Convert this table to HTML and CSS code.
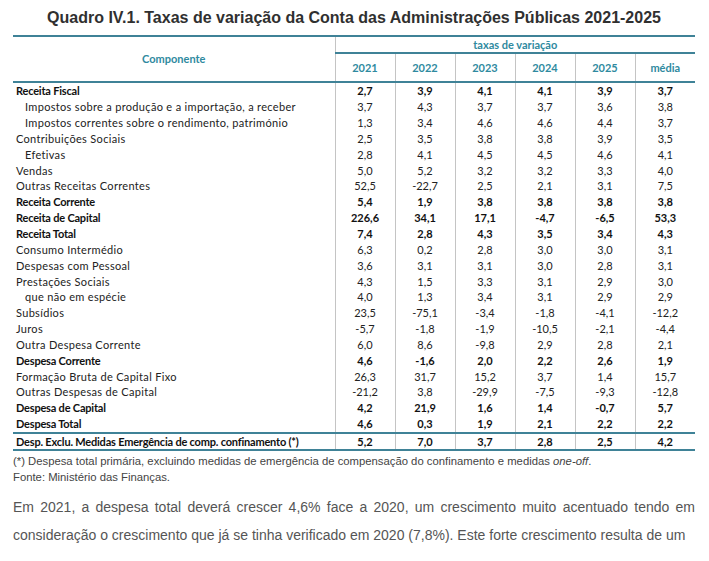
FILE: index.html
```html
<!DOCTYPE html>
<html lang="pt">
<head>
<meta charset="utf-8">
<title>Quadro IV.1</title>
<link rel="stylesheet" href="styles.css">
</head>
<body>
<div class="page">
  <h1 class="title">Quadro IV.1. Taxas de variação da Conta das Administrações Públicas 2021-2025</h1>
  <table class="tbl">
    <colgroup>
      <col class="c-name">
      <col class="c-num"><col class="c-num"><col class="c-num"><col class="c-num"><col class="c-num"><col class="c-num">
    </colgroup>
    <thead>
      <tr class="hr1"><th rowspan="2" class="comp">Componente</th><th colspan="6" class="tv">taxas de variação</th></tr>
      <tr class="hr2"><th>2021</th><th>2022</th><th>2023</th><th>2024</th><th>2025</th><th>média</th></tr>
    </thead>
    <tbody>
      <tr class="b"><td>Receita Fiscal</td><td>2,7</td><td>3,9</td><td>4,1</td><td>4,1</td><td>3,9</td><td>3,7</td></tr>
      <tr class="r ind"><td>Impostos sobre a produção e a importação, a receber</td><td>3,7</td><td>4,3</td><td>3,7</td><td>3,7</td><td>3,6</td><td>3,8</td></tr>
      <tr class="r ind"><td>Impostos correntes sobre o rendimento, património</td><td>1,3</td><td>3,4</td><td>4,6</td><td>4,6</td><td>4,4</td><td>3,7</td></tr>
      <tr class="r"><td>Contribuições Sociais</td><td>2,5</td><td>3,5</td><td>3,8</td><td>3,8</td><td>3,9</td><td>3,5</td></tr>
      <tr class="r ind"><td>Efetivas</td><td>2,8</td><td>4,1</td><td>4,5</td><td>4,5</td><td>4,6</td><td>4,1</td></tr>
      <tr class="r"><td>Vendas</td><td>5,0</td><td>5,2</td><td>3,2</td><td>3,2</td><td>3,3</td><td>4,0</td></tr>
      <tr class="r"><td>Outras Receitas Correntes</td><td>52,5</td><td>-22,7</td><td>2,5</td><td>2,1</td><td>3,1</td><td>7,5</td></tr>
      <tr class="b"><td>Receita Corrente</td><td>5,4</td><td>1,9</td><td>3,8</td><td>3,8</td><td>3,8</td><td>3,8</td></tr>
      <tr class="b"><td>Receita de Capital</td><td>226,6</td><td>34,1</td><td>17,1</td><td>-4,7</td><td>-6,5</td><td>53,3</td></tr>
      <tr class="b"><td>Receita Total</td><td>7,4</td><td>2,8</td><td>4,3</td><td>3,5</td><td>3,4</td><td>4,3</td></tr>
      <tr class="r"><td>Consumo Intermédio</td><td>6,3</td><td>0,2</td><td>2,8</td><td>3,0</td><td>3,0</td><td>3,1</td></tr>
      <tr class="r"><td>Despesas com Pessoal</td><td>3,6</td><td>3,1</td><td>3,1</td><td>3,0</td><td>2,8</td><td>3,1</td></tr>
      <tr class="r"><td>Prestações Sociais</td><td>4,3</td><td>1,5</td><td>3,3</td><td>3,1</td><td>2,9</td><td>3,0</td></tr>
      <tr class="r ind"><td>que não em espécie</td><td>4,0</td><td>1,3</td><td>3,4</td><td>3,1</td><td>2,9</td><td>2,9</td></tr>
      <tr class="r"><td>Subsídios</td><td>23,5</td><td>-75,1</td><td>-3,4</td><td>-1,8</td><td>-4,1</td><td>-12,2</td></tr>
      <tr class="r"><td>Juros</td><td>-5,7</td><td>-1,8</td><td>-1,9</td><td>-10,5</td><td>-2,1</td><td>-4,4</td></tr>
      <tr class="r"><td>Outra Despesa Corrente</td><td>6,0</td><td>8,6</td><td>-9,8</td><td>2,9</td><td>2,8</td><td>2,1</td></tr>
      <tr class="b"><td>Despesa Corrente</td><td>4,6</td><td>-1,6</td><td>2,0</td><td>2,2</td><td>2,6</td><td>1,9</td></tr>
      <tr class="r"><td>Formação Bruta de Capital Fixo</td><td>26,3</td><td>31,7</td><td>15,2</td><td>3,7</td><td>1,4</td><td>15,7</td></tr>
      <tr class="r"><td>Outras Despesas de Capital</td><td>-21,2</td><td>3,8</td><td>-29,9</td><td>-7,5</td><td>-9,3</td><td>-12,8</td></tr>
      <tr class="b"><td>Despesa de Capital</td><td>4,2</td><td>21,9</td><td>1,6</td><td>1,4</td><td>-0,7</td><td>5,7</td></tr>
      <tr class="b"><td>Despesa Total</td><td>4,6</td><td>0,3</td><td>1,9</td><td>2,1</td><td>2,2</td><td>2,2</td></tr>
      <tr class="b last"><td>Desp. Exclu. Medidas Emergência de comp. confinamento (*)</td><td>5,2</td><td>7,0</td><td>3,7</td><td>2,8</td><td>2,5</td><td>4,2</td></tr>
    </tbody>
  </table>
  <p class="note first">(*) Despesa total primária, excluindo medidas de emergência de compensação do confinamento e medidas <em>one-off</em>.</p>
  <p class="note">Fonte: Ministério das Finanças.</p>
  <p class="para">Em 2021, a despesa total deverá crescer 4,6% face a 2020, um crescimento muito acentuado tendo em consideração o crescimento que já se tinha verificado em 2020 (7,8%). Este forte crescimento resulta de um</p>
</div>
</body>
</html>
```

FILE: styles.css
```css
html, body {
  margin: 0;
  padding: 0;
  background: #ffffff;
}

body {
  font-family: "Liberation Sans", Arial, sans-serif;
  color: #333333;
}

.page {
  width: 682px;
  padding: 0 14px 0 13px;
}

.title {
  margin: 0;
  padding-top: 9px;
  height: 26px;
  font-size: 16px;
  line-height: 18px;
  font-weight: bold;
  text-align: center;
  color: #303030;
  white-space: nowrap;
}

.tbl {
  width: 682px;
  table-layout: fixed;
  border-collapse: collapse;
  font-family: Lato, "Open Sans", sans-serif;
  font-size: 11px;
  color: #1e1e1e;
}

.c-name { width: 322px; }
.c-num { width: 60px; }

.tbl th {
  color: #2f8aa0;
  font-weight: bold;
  padding: 0;
  text-align: center;
}

.tbl thead .hr1 th {
  border-top: 2px solid #3f8297;
}

.hr1 { height: 17px; }
.hr2 { height: 29px; }

.tbl .tv {
  border-bottom: 2px solid #3f8297;
}

.tbl .comp {
  border-right: 1px solid #c4c4c4;
  border-bottom: 2px solid #3f8297;
  padding-bottom: 1px;
}

.hr2 th {
  border-bottom: 2px solid #3f8297;
  border-left: 1px solid #c4c4c4;
}

.tbl td {
  padding: 0;
  height: 15.85px;
  line-height: 15px;
  text-align: center;
  border-left: 1px solid #c4c4c4;
  white-space: nowrap;
}

.tbl td:first-child {
  text-align: left;
  padding-left: 3px;
  border-left: none;
}

.tbl .r td {
  color: #222222;
}

.tbl .r td:first-child {
  letter-spacing: 0.32px;
}

.tbl .ind td:first-child {
  padding-left: 12px;
}

.tbl .b td {
  font-weight: bold;
  color: #111111;
}

.tbl .b td:first-child {
  letter-spacing: -0.2px;
}

.tbl .last td {
  border-top: 2px solid #3f8297;
  border-bottom: 2px solid #3f8297;
  height: 15px;
}

.note {
  margin: 0;
  font-size: 11.3px;
  line-height: 16px;
  color: #444444;
}

.note.first {
  margin-top: 2px;
}

.para {
  margin: 8px 0 0;
  font-size: 14px;
  line-height: 28px;
  text-align: justify;
  color: #555555;
}
```
